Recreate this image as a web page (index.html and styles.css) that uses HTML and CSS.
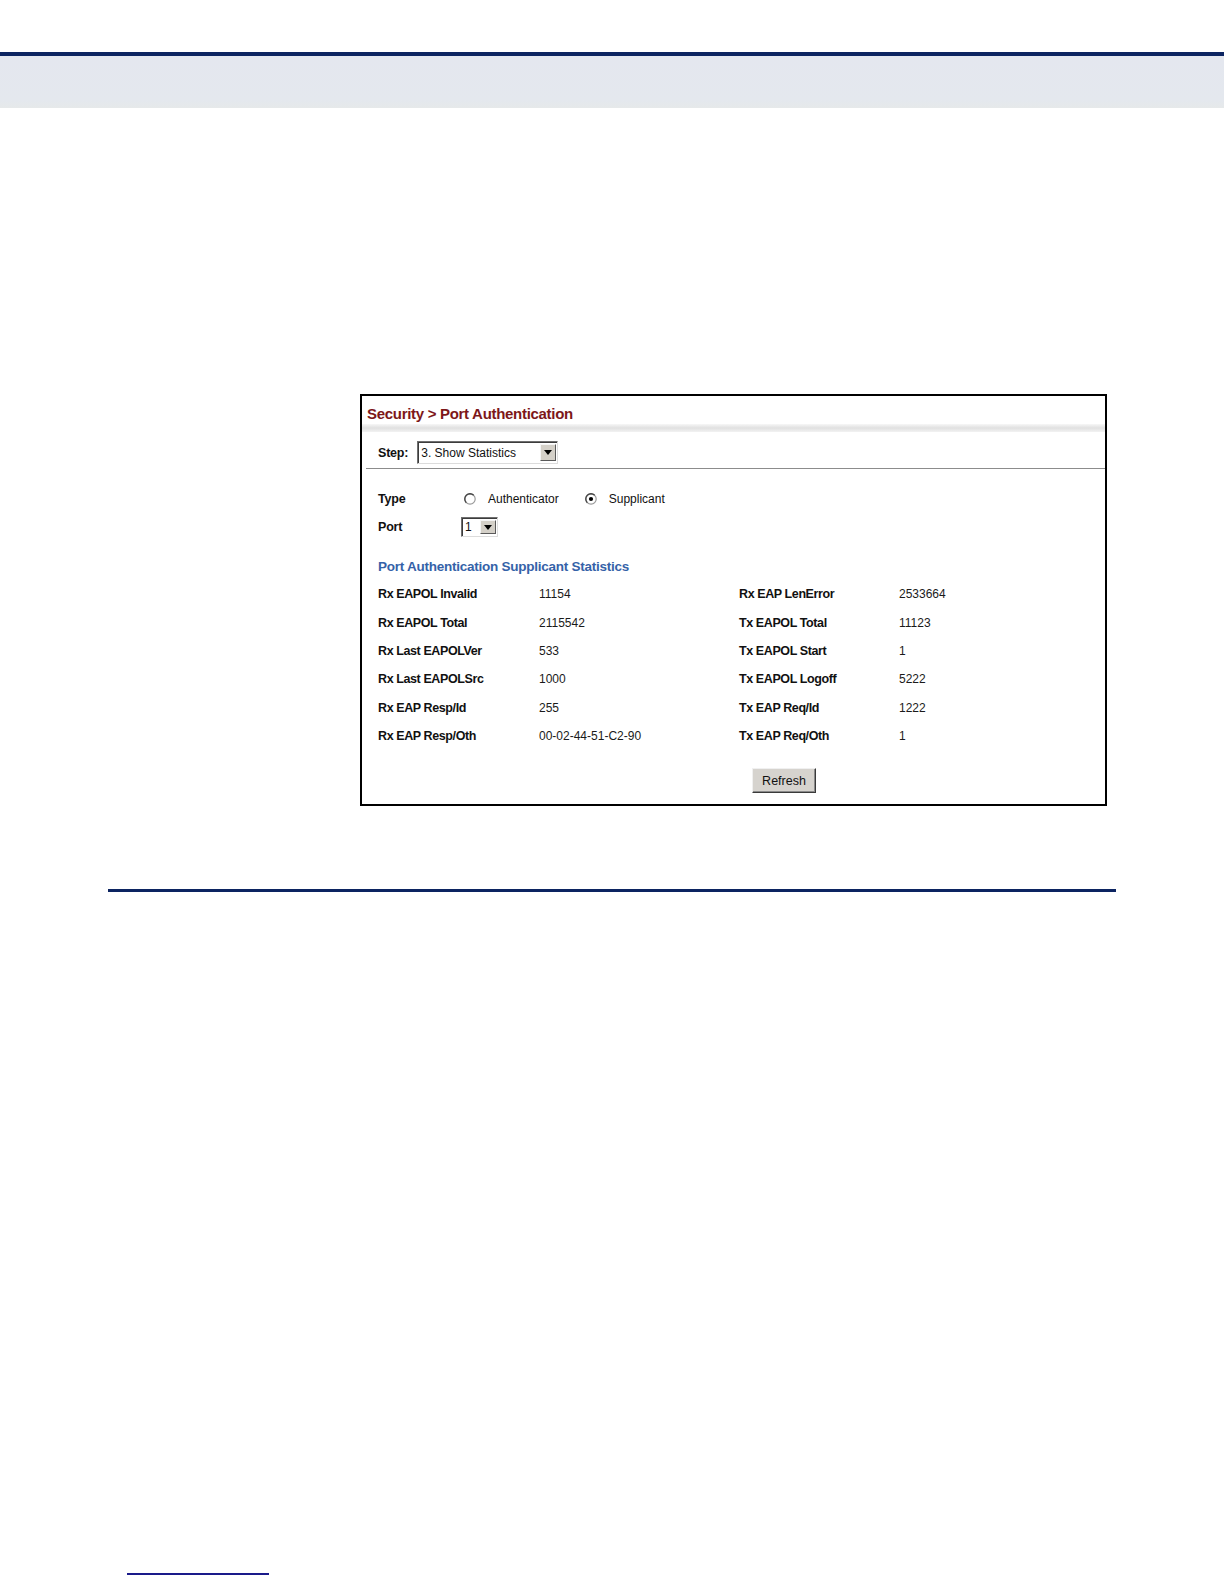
FILE: index.html
```html
<!DOCTYPE html>
<html lang="en">

<head>
    <meta charset="UTF-8">
    <title>Security &gt; Port Authentication</title>
    <link rel="stylesheet" href="styles.css">
</head>

<body>
    <div class="top-rule"></div>
    <div class="header-band"></div>

    <div class="screen">
        <div class="screen-title">Security &gt; Port Authentication</div>
        <div class="title-bar"></div>

        <div class="step-row">
            <span class="field-label step-label">Step:</span>
            <div class="select select-step">
                <span class="select-text">3. Show Statistics</span>
                <span class="select-btn">
                    <svg width="8" height="5" viewBox="0 0 8 5"><path d="M0 0h8L4 5z" fill="#000"/></svg>
                </span>
            </div>
        </div>

        <div class="form">
            <div class="form-row">
                <span class="field-label">Type</span>
                <label class="radio">
                    <svg width="12" height="12" viewBox="0 0 12 12">
                        <circle cx="6" cy="6" r="5.2" fill="#fff" stroke="#9a9a9a" stroke-width="1.2"/>
                        <path d="M2.3 9.7A5.2 5.2 0 0 1 9.7 2.3" fill="none" stroke="#444" stroke-width="1.3"/>
                    </svg>
                    Authenticator
                </label>
                <label class="radio">
                    <svg width="12" height="12" viewBox="0 0 12 12">
                        <circle cx="6" cy="6" r="5.2" fill="#fff" stroke="#9a9a9a" stroke-width="1.2"/>
                        <path d="M2.3 9.7A5.2 5.2 0 0 1 9.7 2.3" fill="none" stroke="#444" stroke-width="1.3"/>
                        <circle cx="6" cy="6" r="2.1" fill="#000"/>
                    </svg>
                    Supplicant
                </label>
            </div>
            <div class="form-row port-row">
                <span class="field-label">Port</span>
                <div class="select select-port">
                    <span class="select-text">1</span>
                    <span class="select-btn">
                        <svg width="8" height="5" viewBox="0 0 8 5"><path d="M0 0h8L4 5z" fill="#000"/></svg>
                    </span>
                </div>
            </div>

            <div class="section-title">Port Authentication Supplicant Statistics</div>

            <div class="stats">
                <span class="stat-label">Rx EAPOL Invalid</span><span class="stat-value">11154</span>
                <span class="stat-label">Rx EAP LenError</span><span class="stat-value">2533664</span>

                <span class="stat-label">Rx EAPOL Total</span><span class="stat-value">2115542</span>
                <span class="stat-label">Tx EAPOL Total</span><span class="stat-value">11123</span>

                <span class="stat-label">Rx Last EAPOLVer</span><span class="stat-value">533</span>
                <span class="stat-label">Tx EAPOL Start</span><span class="stat-value">1</span>

                <span class="stat-label">Rx Last EAPOLSrc</span><span class="stat-value">1000</span>
                <span class="stat-label">Tx EAPOL Logoff</span><span class="stat-value">5222</span>

                <span class="stat-label">Rx EAP Resp/Id</span><span class="stat-value">255</span>
                <span class="stat-label">Tx EAP Req/Id</span><span class="stat-value">1222</span>

                <span class="stat-label">Rx EAP Resp/Oth</span><span class="stat-value">00-02-44-51-C2-90</span>
                <span class="stat-label">Tx EAP Req/Oth</span><span class="stat-value">1</span>
            </div>

            <div class="actions">
                <button class="btn">Refresh</button>
            </div>
        </div>
    </div>

    <div class="section-rule"></div>

    <div class="footer-rule"></div>
</body>

</html>
```

FILE: styles.css
```css
body {
    margin: 0;
    padding: 0;
    font-family: 'Liberation Sans', Arial, sans-serif;
    color: #111;
    background: #fff;
}

.top-rule {
    margin-top: 52px;
    height: 4px;
    background: #0c2461;
}

.header-band {
    height: 52px;
    background: linear-gradient(to bottom, #e4e7ef, #e4e8ee 85%, #e6e9ea);
}

/* screenshot box */
.screen {
    margin: 286px 0 0 360px;
    width: 747px;
    height: 412px;
    box-sizing: border-box;
    border: 2px solid #000;
}

.screen-title {
    padding: 8px 0 0 5px;
    line-height: 20px;
    font-size: 15px;
    font-weight: bold;
    color: #7d1719;
    letter-spacing: -0.3px;
}

.title-bar {
    height: 8px;
    background: linear-gradient(to bottom, #f7f7f7, #e0e0e0 50%, #f2f2f2);
}

.step-row {
    display: flex;
    align-items: center;
    margin-left: 4px;
    padding: 9px 0 4px 12px;
    border-bottom: 1px solid #8c8c8c;
}

.field-label {
    font-size: 12.5px;
    font-weight: bold;
    color: #111;
    letter-spacing: -0.2px;
}

.step-label {
    margin-right: 9px;
}

.select {
    display: inline-flex;
    align-items: center;
    justify-content: space-between;
    box-sizing: border-box;
    border: 1px solid;
    border-color: #6f6f6f #dcdcdc #dcdcdc #6f6f6f;
    box-shadow: inset 1px 1px 0 #3c3c3c;
    background: #fff;
    padding: 2px 1px 2px 3px;
}

.select-step {
    width: 141px;
    height: 23px;
}

.select-port {
    width: 37px;
    height: 20px;
}

.select-text {
    font-size: 12px;
    color: #111;
}

.select-btn {
    display: flex;
    align-items: center;
    justify-content: center;
    width: 16px;
    height: 100%;
    box-sizing: border-box;
    background: #d4d0c8;
    border: 1px solid;
    border-color: #f4f4f4 #5a5a5a #5a5a5a #f4f4f4;
}

.form {
    padding: 20px 0 0 16px;
}

.form-row {
    display: flex;
    align-items: center;
    height: 20px;
    font-size: 12px;
}

.form-row .field-label {
    width: 86px;
}

.port-row {
    margin-top: 8px;
}

.port-row .field-label {
    width: 83px;
}

.radio {
    display: inline-flex;
    align-items: center;
    gap: 12px;
    margin-right: 26px;
    color: #111;
}

.section-title {
    margin-top: 20px;
    line-height: 20px;
    font-size: 13.5px;
    font-weight: bold;
    color: #3562a8;
    letter-spacing: -0.25px;
}

.stats {
    display: grid;
    grid-template-columns: 161px 200px 160px 1fr;
    grid-auto-rows: 28.4px;
    align-items: center;
    margin-top: 3px;
    font-size: 12px;
}

.stat-label {
    font-size: 12.5px;
    font-weight: bold;
    letter-spacing: -0.4px;
    color: #111;
}

.stat-value {
    color: #1a1a1a;
}

.actions {
    margin-top: 18px;
    padding-left: 374px;
}

.btn {
    width: 64px;
    height: 25px;
    padding: 0;
    font-family: 'Liberation Sans', Arial, sans-serif;
    font-size: 12.5px;
    color: #111;
    background: #d6d3ce;
    border: 1px solid;
    border-color: #f0f0f0 #3a3a3a #3a3a3a #f0f0f0;
    box-shadow: inset -1px -1px 0 #8a8a8a;
}

.section-rule {
    margin: 83px 0 0 108px;
    width: 1008px;
    height: 3px;
    background: #0c2461;
}

.footer-rule {
    margin: 681px 0 0 127px;
    width: 142px;
    height: 2px;
    background: #1a1a8a;
}
```
